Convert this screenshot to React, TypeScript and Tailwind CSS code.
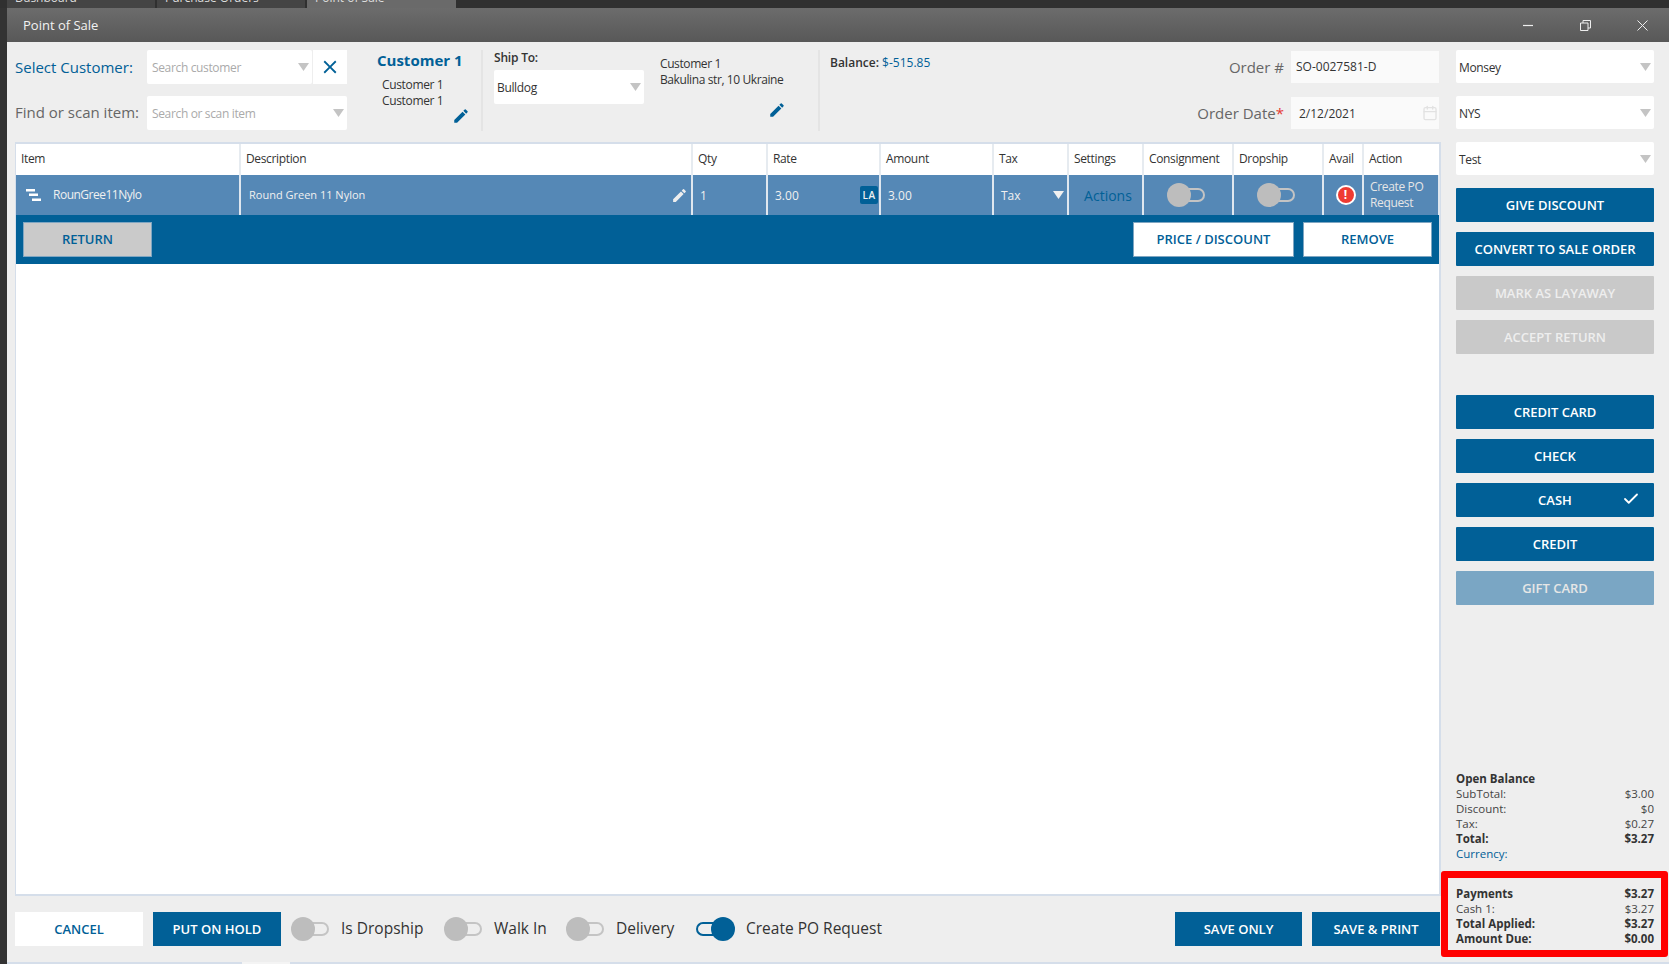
import { Check, Calendar } from "lucide-react";
import { MdClose, MdEdit } from "react-icons/md";

const columns = ["Item", "Description", "Qty", "Rate", "Amount", "Tax", "Settings", "Consignment", "Dropship", "Avail", "Action"];

function Arrow({ className = "" }: { className?: string }) {
  return (
    <svg width="11" height="8" viewBox="0 0 11 8" className={className}>
      <path d="M0 0h11L5.5 8z" fill="currentColor" />
    </svg>
  );
}

function SelectBox({ text, placeholder, className }: { text?: string; placeholder?: string; className: string }) {
  return (
    <div className={`flex items-center justify-between bg-white rounded-[2px] pr-[3px] text-[12px] tracking-[-0.35px] ${placeholder ? "pl-[5px]" : "pl-[3px]"} ${className}`}>
      <span className={`pt-[2px] ${placeholder ? "text-[#aaaaaa]" : "text-[#333333]"}`}>{text || placeholder}</span>
      <Arrow className="text-[#c4c4c4]" />
    </div>
  );
}

function Toggle({ on = false, className = "" }: { on?: boolean; className?: string }) {
  if (on) {
    return (
      <div className={`flex items-center w-[39px] h-[24px] shrink-0 ${className}`}>
        <div className="w-[18px] h-[14px] -mr-[3px] rounded-l-full border-2 border-r-0 border-[#016097]" />
        <div className="w-[24px] h-[24px] rounded-full bg-[#016097]" />
      </div>
    );
  }
  return (
    <div className={`flex items-center w-[38px] h-[24px] shrink-0 ${className}`}>
      <div className="w-[24px] h-[24px] rounded-full bg-[#bdbdbd] z-10" />
      <div className="w-[18px] h-[14px] -ml-[4px] rounded-r-full border-2 border-l-0 border-[#c4c4c4]" />
    </div>
  );
}

function SideButton({ label, tone = "blue", check = false }: { label: string; tone?: "blue" | "gray" | "pale"; check?: boolean }) {
  const tones = {
    blue: "bg-[#016097] text-white",
    gray: "bg-[#c9c9c9] text-[#eeeeee]",
    pale: "bg-[#7aa6c4] text-[#e6e6e6]",
  };
  return (
    <div className={`relative h-[34px] flex items-center justify-center rounded-[1px] pt-[1px] text-[13px] font-semibold ${tones[tone]}`}>
      {label}
      {check && <Check size={18} strokeWidth={2.4} className="absolute right-[14px] top-[7px]" />}
    </div>
  );
}

function Line({ left, right, bold = false }: { left: string; right: string; bold?: boolean }) {
  return (
    <div className={`flex justify-between h-[15px] leading-[15px] ${bold ? "font-bold text-[#333333]" : "text-[#444444]"}`}>
      <span>{left}</span>
      <span>{right}</span>
    </div>
  );
}

function Cell({ children, className = "" }: { children?: React.ReactNode; className?: string }) {
  return <div className={`flex items-center border-r-2 border-[#dfe7ef] min-w-0 ${className}`}>{children}</div>;
}

export default function App() {
  return (
    <div className="w-[1669px] h-[964px] overflow-hidden flex flex-col bg-[#333333] font-['Open_Sans','Noto_Sans',sans-serif] text-[#333333]">
      <div className="h-[8px] shrink-0 flex gap-[2px] pl-[7px] overflow-hidden bg-[#303030] text-[12px] text-[#dddddd]">
        <div className="w-[148px] h-[8px] overflow-hidden bg-[#444444] pl-[8px]">
          <span className="block leading-[12px] -mt-[8px]">Dashboard</span>
        </div>
        <div className="w-[148px] h-[8px] overflow-hidden bg-[#444444] pl-[8px]">
          <span className="block leading-[12px] -mt-[8px]">Purchase Orders</span>
        </div>
        <div className="w-[149px] h-[8px] overflow-hidden bg-[#6a6a6a] pl-[8px]">
          <span className="block leading-[12px] -mt-[8px]">Point of Sale</span>
        </div>
      </div>

      <div className="flex-1 flex flex-col ml-[7px] min-h-0">
        <div className="h-[34px] shrink-0 flex items-center justify-between bg-gradient-to-b from-[#6c6c6c] to-[#585858] pl-[16px] text-[13px] text-[#f2f2f2]">
          <span className="pt-[2px]">Point of Sale</span>
          <div className="flex items-center gap-[46px] pr-[21px] text-[#eeeeee]">
            <svg width="11" height="11" viewBox="0 0 11 11">
              <path d="M0 5.5h10" stroke="currentColor" strokeWidth="1.2" />
            </svg>
            <svg width="11" height="11" viewBox="0 0 11 11" fill="none" stroke="currentColor">
              <path d="M.5 3h7.5v7.5h-7.5zM3 3V.5h7.5V8H8" />
            </svg>
            <svg width="11" height="11" viewBox="0 0 11 11">
              <path d="M.5.5l10 10M10.5.5l-10 10" stroke="currentColor" strokeWidth="1" />
            </svg>
          </div>
        </div>

        <div className="relative flex-1 flex bg-[#eeeeee] min-h-0 border-b-2 border-[#d5deea]">
          <div className="w-[1432px] shrink-0 flex flex-col">
            <div className="h-[100px] shrink-0 flex pt-[8px] pl-[8px]">
              <div className="w-[332px] shrink-0 flex flex-col gap-[12px]">
                <div className="flex items-center h-[34px]">
                  <span className="w-[132px] text-[15px] text-[#016097]">Select Customer:</span>
                  <SelectBox placeholder="Search customer" className="w-[165px] h-[34px]" />
                  <div className="ml-[1px] w-[34px] h-[34px] bg-white flex items-center justify-center text-[#016097]">
                    <MdClose size={22} />
                  </div>
                </div>
                <div className="flex items-center h-[34px]">
                  <span className="w-[132px] pb-[1px] text-[15px] text-[#666666]">Find or scan item:</span>
                  <SelectBox placeholder="Search or scan item" className="w-[200px] h-[34px]" />
                </div>
              </div>

              <div className="w-[136px] shrink-0 pl-[30px] relative border-r-2 border-[#e4e4e4] h-[81px]">
                <div className="text-[15px] font-bold text-[#016097] leading-[20px]">Customer 1</div>
                <div className="pl-[5px] mt-[7px] text-[12px] leading-[16px] tracking-[-0.35px]">
                  <div>Customer 1</div>
                  <div>Customer 1</div>
                </div>
                <MdEdit size={18} className="absolute right-[11px] bottom-[6px] text-[#016097]" />
              </div>

              <div className="w-[158px] shrink-0 pl-[11px]">
                <div className="text-[12px] font-semibold leading-[16px] tracking-[-0.2px]">Ship To:</div>
                <SelectBox text="Bulldog" className="w-[150px] h-[34px] mt-[4px]" />
              </div>

              <div className="w-[179px] shrink-0 pl-[19px] pt-[6px] relative border-r-2 border-[#e4e4e4] h-[81px] text-[12px] leading-[16px] tracking-[-0.4px]">
                <div>Customer 1</div>
                <div>Bakulina str, 10 Ukraine</div>
                <MdEdit size={18} className="absolute right-[32px] bottom-[12px] text-[#016097]" />
              </div>

              <div className="pl-[10px] pt-[5px] text-[12px] leading-[16px] font-semibold w-[278px]">
                Balance: <span className="font-medium text-[#016097]">$-515.85</span>
              </div>

              <div className="flex-1 flex flex-col gap-[14px] pt-[1px]">
                <div className="flex items-center justify-end gap-[7px] h-[32px] text-[15px] text-[#666666]">
                  <span className="pt-[1px]">Order #</span>
                  <div className="w-[148px] h-[32px] bg-[#fafafa] flex items-center pl-[5px] text-[12px] text-[#333333]">SO-0027581-D</div>
                </div>
                <div className="flex items-center justify-end gap-[7px] h-[32px] text-[15px] text-[#666666]">
                  <span>
                    Order Date<span className="text-[#e53935] align-top">*</span>
                  </span>
                  <div className="w-[148px] h-[32px] bg-[#fafafa] flex items-center justify-between pl-[8px] pr-[1px] text-[12px] text-[#333333]">
                    <span className="pt-[1px]">2/12/2021</span>
                    <Calendar size={16} className="text-[#e2e2e2]" />
                  </div>
                </div>
              </div>
            </div>

            <div className="mx-[8px] h-[754px] shrink-0 flex flex-col bg-white border-t-2 border-l border-r-2 border-b-2 border-[#d5deea] w-[1426px]">
              <div className="h-[31px] grid grid-cols-[225px_452px_75px_113px_113px_75px_75px_90px_90px_40px_76px] text-[12px] tracking-[-0.35px]">
                {columns.map((c) => (
                  <Cell key={c} className="pl-[5px] pb-[2px] border-[#e6ebf0] last:border-r-0">
                    {c}
                  </Cell>
                ))}
              </div>
              <div className="h-[40px] grid grid-cols-[225px_452px_75px_113px_113px_75px_75px_90px_90px_40px_76px] bg-[#5588b6] text-[12px] text-[#f0f0f0]">
                <Cell className="pl-[10px] gap-[12px]">
                  <svg width="15" height="12" viewBox="0 0 15 12" fill="white" className="shrink-0">
                    <path d="M0 0h9v2.4H0zM3 4.6h9V7H3zM6 9.4h9V12H6z" />
                  </svg>
                  <span className="tracking-[-0.5px]">RounGree11Nylo</span>
                </Cell>
                <Cell className="pl-[8px] justify-between pr-[3px]">
                  <span className="text-[11px]">Round Green 11 Nylon</span>
                  <MdEdit size={17} className="text-[#eeeeee]" />
                </Cell>
                <Cell className="pl-[7px] pt-[2px]">1</Cell>
                <Cell className="pl-[7px] justify-between pr-[1px]">
                  <span className="pt-[2px]">3.00</span>
                  <span className="w-[18px] h-[18px] rounded-[2px] bg-[#016097] text-[10px] font-semibold tracking-[0.4px] flex items-center justify-center">LA</span>
                </Cell>
                <Cell className="pl-[7px] pt-[2px]">3.00</Cell>
                <Cell className="pl-[7px] justify-between pr-[3px]">
                  <span className="pt-[2px]">Tax</span>
                  <Arrow className="text-[#f0f0f0]" />
                </Cell>
                <Cell className="justify-center pl-[5px] pt-[1px] text-[14px] font-medium text-[#016097]">Actions</Cell>
                <Cell className="pl-[23px]">
                  <Toggle />
                </Cell>
                <Cell className="pl-[23px]">
                  <Toggle />
                </Cell>
                <Cell className="justify-center pl-[5px]">
                  <span className="w-[20px] h-[20px] rounded-full bg-[#ef3b32] border-2 border-white text-white text-[12px] font-bold flex items-center justify-center leading-none">!</span>
                </Cell>
                <Cell className="pl-[6px] border-r-0 text-[12px] leading-[16px] tracking-[-0.35px] text-[#e6e6e6]">Create PO Request</Cell>
              </div>
              <div className="h-[49px] flex items-center justify-between bg-[#016097] pl-[7px] pr-[7px] text-[13px] font-semibold">
                <div className="w-[129px] h-[35px] flex items-center justify-center bg-[#cacaca] border border-[#7fa6c2] text-[#016097]">RETURN</div>
                <div className="flex gap-[9px]">
                  <div className="w-[161px] h-[35px] flex items-center justify-center bg-white border border-[#7fa6c2] text-[#016097]">PRICE / DISCOUNT</div>
                  <div className="w-[129px] h-[35px] flex items-center justify-center bg-white border border-[#7fa6c2] text-[#016097]">REMOVE</div>
                </div>
              </div>
            </div>

            <div className="flex-1 flex items-center pl-[8px] text-[15.5px]">
              <div className="w-[128px] h-[34px] flex items-center justify-center pt-[1px] bg-white text-[13px] font-semibold text-[#016097]">CANCEL</div>
              <div className="ml-[10px] w-[128px] h-[34px] flex items-center justify-center pt-[1px] bg-[#016097] text-[13px] font-semibold text-white">PUT ON HOLD</div>
              <Toggle className="ml-[10px]" />
              <span className="ml-[12px] w-[103px]">Is Dropship</span>
              <Toggle />
              <span className="ml-[12px] w-[72px]">Walk In</span>
              <Toggle />
              <span className="ml-[12px] w-[80px]">Delivery</span>
              <Toggle on />
              <span className="ml-[11px]">Create PO Request</span>
              <div className="ml-auto mr-[-1px] flex gap-[10px]">
                <div className="w-[127px] h-[34px] flex items-center justify-center pt-[1px] bg-[#016097] text-[13px] font-semibold text-white">SAVE ONLY</div>
                <div className="w-[128px] h-[34px] flex items-center justify-center pt-[1px] bg-[#016097] text-[13px] font-semibold text-white">SAVE &amp; PRINT</div>
              </div>
            </div>
          </div>

          <div className="w-[230px] shrink-0 flex flex-col pl-[17px] pt-[8px]">
            <div className="w-[198px] flex flex-col">
              <SelectBox text="Monsey" className="h-[33px] mb-[13px]" />
              <SelectBox text="NYS" className="h-[33px] mb-[13px]" />
              <SelectBox text="Test" className="h-[33px] mb-[13px]" />
              <div className="flex flex-col gap-[10px]">
                <SideButton label="GIVE DISCOUNT" />
                <SideButton label="CONVERT TO SALE ORDER" />
                <SideButton label="MARK AS LAYAWAY" tone="gray" />
                <SideButton label="ACCEPT RETURN" tone="gray" />
              </div>
              <div className="flex flex-col gap-[10px] mt-[41px]">
                <SideButton label="CREDIT CARD" />
                <SideButton label="CHECK" />
                <SideButton label="CASH" check />
                <SideButton label="CREDIT" />
                <SideButton label="GIFT CARD" tone="pale" />
              </div>
            </div>
            <div className="mt-auto w-[198px] text-[11.5px]">
              <div className="font-bold h-[15px] leading-[15px]">Open Balance</div>
              <Line left="SubTotal:" right="$3.00" />
              <Line left="Discount:" right="$0" />
              <Line left="Tax:" right="$0.27" />
              <Line left="Total:" right="$3.27" bold />
              <div className="h-[15px] leading-[15px] text-[#016097]">Currency:</div>
            </div>
            <div className="mt-[10px] -ml-[15px] w-[227px] h-[86px] border-[7px] border-[#ff0000] rounded-[3px] pl-[8px] pr-[7px] pt-[8px] text-[11.5px]">
              <Line left="Payments" right="$3.27" bold />
              <Line left="Cash 1:" right="$3.27" />
              <Line left="Total Applied:" right="$3.27" bold />
              <Line left="Amount Due:" right="$0.00" bold />
            </div>
            <div className="h-[5px]" />
          </div>

          <div className="absolute left-[235px] -bottom-[2px] w-[48px] h-[2px] bg-[#f4f4f4]" />
        </div>
      </div>
    </div>
  );
}
